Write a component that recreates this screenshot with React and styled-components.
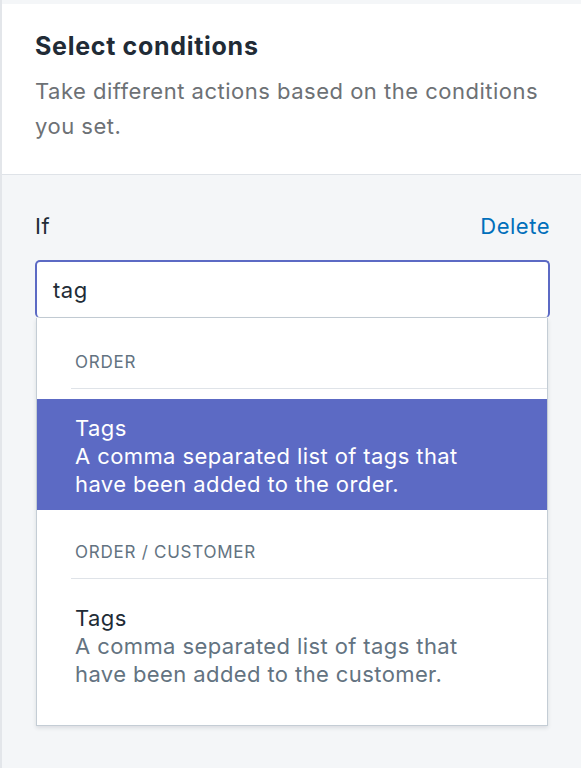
import React from "react";
import styled, { createGlobalStyle } from "styled-components";

const GlobalStyle = createGlobalStyle`
  html, body {
    margin: 0;
    padding: 0;
    background: #f4f6f8;
    font-family: Inter, "Noto Sans", sans-serif;
    -webkit-font-smoothing: antialiased;
  }
`;

const Page = styled.div`
  min-height: 768px;
  box-sizing: border-box;
  padding-top: 4px;
  border-left: 2px solid #e3e6ea;
  background: #f4f6f8;
`;

const Header = styled.header`
  background: #fff;
  border-bottom: 1px solid #dfe3e8;
  padding: 26px 31px 0 33px;
  height: 171px;
  box-sizing: border-box;
`;

const Title = styled.h2`
  margin: 0;
  font-size: 25px;
  line-height: 32px;
  font-weight: 700;
  letter-spacing: 0.7px;
  color: #212b36;
`;

const Description = styled.p`
  margin: 12px 0 0;
  font-size: 22px;
  line-height: 35px;
  letter-spacing: 0.5px;
  color: #6d7175;
`;

const Body = styled.section`
  padding: 35px 31px 0 33px;
`;

const LabelRow = styled.div`
  display: flex;
  justify-content: space-between;
  align-items: center;
  height: 32px;
  font-size: 22px;
  letter-spacing: 0.5px;
`;

const Label = styled.span`
  color: #212b36;
`;

const LinkButton = styled.button`
  border: none;
  background: none;
  padding: 0;
  font: inherit;
  letter-spacing: inherit;
  color: #006fbb;
  cursor: pointer;
`;

const Field = styled.div`
  margin-top: 18px;
  height: 58px;
  box-sizing: border-box;
  border: 2px solid #5c6ac4;
  border-bottom: 1px solid #c4cdd5;
  border-radius: 5px;
  background: #fff;
  display: flex;
  align-items: center;
  padding: 0 16px;
  font-size: 22px;
  letter-spacing: 0.5px;
  color: #212b36;
`;

const Popover = styled.div`
  margin: 0 2px 0 1px;
  background: #fff;
  border: 1px solid #c4cdd5;
  border-top: none;
  box-shadow: 0 2px 4px rgba(33, 43, 54, 0.12);
  padding: 32px 0 25px;
`;

const Group = styled.div`
  & + & {
    margin-top: 30px;
  }
`;

const GroupTitle = styled.div`
  margin-left: 34px;
  padding: 0 0 14px 4px;
  border-bottom: 1px solid #dfe3e8;
  font-size: 17px;
  line-height: 24px;
  letter-spacing: 0.75px;
  text-transform: uppercase;
  color: #637381;
`;

const Option = styled.div`
  margin-top: 10px;
  padding: 15px 38px 12px;
  font-size: 22px;
  line-height: 28px;
  letter-spacing: 0.4px;
  background: ${(p) => (p.active ? "#5c6ac4" : "#fff")};
  color: ${(p) => (p.active ? "#fff" : "#212b36")};
`;

const OptionName = styled.div``;

const OptionHelp = styled.div`
  color: ${(p) => (p.active ? "#fff" : "#637381")};
  max-width: 420px;
`;

const groups = [
  {
    title: "Order",
    options: [
      {
        name: "Tags",
        help: "A comma separated list of tags that have been added to the order.",
        active: true,
      },
    ],
  },
  {
    title: "Order / Customer",
    options: [
      {
        name: "Tags",
        help: "A comma separated list of tags that have been added to the customer.",
        active: false,
      },
    ],
  },
];

export default function App() {
  return (
    <>
      <GlobalStyle />
      <Page>
        <Header>
          <Title>Select conditions</Title>
          <Description>
            Take different actions based on the conditions you set.
          </Description>
        </Header>
        <Body>
          <LabelRow>
            <Label>If</Label>
            <LinkButton>Delete</LinkButton>
          </LabelRow>
          <Field>tag</Field>
          <Popover>
            {groups.map((g) => (
              <Group key={g.title}>
                <GroupTitle>{g.title}</GroupTitle>
                {g.options.map((o) => (
                  <Option key={o.help} active={o.active}>
                    <OptionName>{o.name}</OptionName>
                    <OptionHelp active={o.active}>{o.help}</OptionHelp>
                  </Option>
                ))}
              </Group>
            ))}
          </Popover>
        </Body>
      </Page>
    </>
  );
}
